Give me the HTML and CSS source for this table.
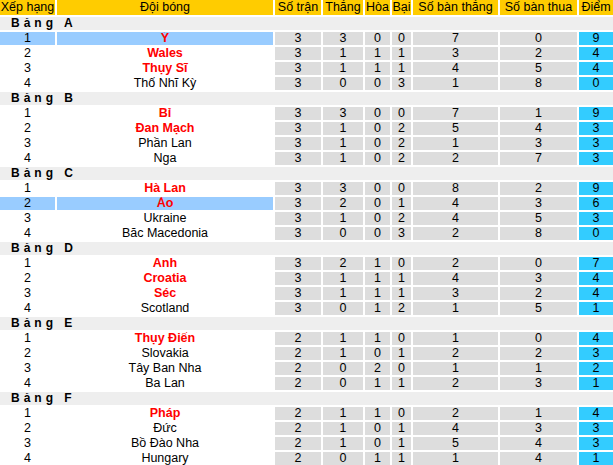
FILE: index.html
```html
<!DOCTYPE html>
<html lang="vi">
<head>
<meta charset="utf-8">
<title>Bảng xếp hạng</title>
<link rel="stylesheet" href="styles.css">
</head>
<body>
<div class="standings">
  <div class="hd">Xếp hạng</div><div class="hd">Đội bóng</div><div class="hd">Số trận</div><div class="hd">Thắng</div><div class="hd">Hòa</div><div class="hd">Bại</div><div class="hd">Số bàn thắng</div><div class="hd">Số bàn thua</div><div class="hd">Điểm</div>

  <div class="grp">Bảng A</div>
  <div class="rk hl">1</div><div class="tm q hl">Ý</div><div class="n">3</div><div class="n">3</div><div class="n">0</div><div class="n">0</div><div class="n">7</div><div class="n">0</div><div class="pt">9</div>
  <div class="rk">2</div><div class="tm q">Wales</div><div class="n">3</div><div class="n">1</div><div class="n">1</div><div class="n">1</div><div class="n">3</div><div class="n">2</div><div class="pt">4</div>
  <div class="rk">3</div><div class="tm q">Thụy Sĩ</div><div class="n">3</div><div class="n">1</div><div class="n">1</div><div class="n">1</div><div class="n">4</div><div class="n">5</div><div class="pt">4</div>
  <div class="rk">4</div><div class="tm">Thổ Nhĩ Kỳ</div><div class="n">3</div><div class="n">0</div><div class="n">0</div><div class="n">3</div><div class="n">1</div><div class="n">8</div><div class="pt">0</div>

  <div class="grp">Bảng B</div>
  <div class="rk">1</div><div class="tm q">Bỉ</div><div class="n">3</div><div class="n">3</div><div class="n">0</div><div class="n">0</div><div class="n">7</div><div class="n">1</div><div class="pt">9</div>
  <div class="rk">2</div><div class="tm q">Đan Mạch</div><div class="n">3</div><div class="n">1</div><div class="n">0</div><div class="n">2</div><div class="n">5</div><div class="n">4</div><div class="pt">3</div>
  <div class="rk">3</div><div class="tm">Phần Lan</div><div class="n">3</div><div class="n">1</div><div class="n">0</div><div class="n">2</div><div class="n">1</div><div class="n">3</div><div class="pt">3</div>
  <div class="rk">4</div><div class="tm">Nga</div><div class="n">3</div><div class="n">1</div><div class="n">0</div><div class="n">2</div><div class="n">2</div><div class="n">7</div><div class="pt">3</div>

  <div class="grp">Bảng C</div>
  <div class="rk">1</div><div class="tm q">Hà Lan</div><div class="n">3</div><div class="n">3</div><div class="n">0</div><div class="n">0</div><div class="n">8</div><div class="n">2</div><div class="pt">9</div>
  <div class="rk hl">2</div><div class="tm q hl">Ảo</div><div class="n">3</div><div class="n">2</div><div class="n">0</div><div class="n">1</div><div class="n">4</div><div class="n">3</div><div class="pt">6</div>
  <div class="rk">3</div><div class="tm">Ukraine</div><div class="n">3</div><div class="n">1</div><div class="n">0</div><div class="n">2</div><div class="n">4</div><div class="n">5</div><div class="pt">3</div>
  <div class="rk">4</div><div class="tm">Bắc Macedonia</div><div class="n">3</div><div class="n">0</div><div class="n">0</div><div class="n">3</div><div class="n">2</div><div class="n">8</div><div class="pt">0</div>

  <div class="grp">Bảng D</div>
  <div class="rk">1</div><div class="tm q">Anh</div><div class="n">3</div><div class="n">2</div><div class="n">1</div><div class="n">0</div><div class="n">2</div><div class="n">0</div><div class="pt">7</div>
  <div class="rk">2</div><div class="tm q">Croatia</div><div class="n">3</div><div class="n">1</div><div class="n">1</div><div class="n">1</div><div class="n">4</div><div class="n">3</div><div class="pt">4</div>
  <div class="rk">3</div><div class="tm q">Séc</div><div class="n">3</div><div class="n">1</div><div class="n">1</div><div class="n">1</div><div class="n">3</div><div class="n">2</div><div class="pt">4</div>
  <div class="rk">4</div><div class="tm">Scotland</div><div class="n">3</div><div class="n">0</div><div class="n">1</div><div class="n">2</div><div class="n">1</div><div class="n">5</div><div class="pt">1</div>

  <div class="grp">Bảng E</div>
  <div class="rk">1</div><div class="tm q">Thụy Điển</div><div class="n">2</div><div class="n">1</div><div class="n">1</div><div class="n">0</div><div class="n">1</div><div class="n">0</div><div class="pt">4</div>
  <div class="rk">2</div><div class="tm">Slovakia</div><div class="n">2</div><div class="n">1</div><div class="n">0</div><div class="n">1</div><div class="n">2</div><div class="n">2</div><div class="pt">3</div>
  <div class="rk">3</div><div class="tm">Tây Ban Nha</div><div class="n">2</div><div class="n">0</div><div class="n">2</div><div class="n">0</div><div class="n">1</div><div class="n">1</div><div class="pt">2</div>
  <div class="rk">4</div><div class="tm">Ba Lan</div><div class="n">2</div><div class="n">0</div><div class="n">1</div><div class="n">1</div><div class="n">2</div><div class="n">3</div><div class="pt">1</div>

  <div class="grp">Bảng F</div>
  <div class="rk">1</div><div class="tm q">Pháp</div><div class="n">2</div><div class="n">1</div><div class="n">1</div><div class="n">0</div><div class="n">2</div><div class="n">1</div><div class="pt">4</div>
  <div class="rk">2</div><div class="tm">Đức</div><div class="n">2</div><div class="n">1</div><div class="n">0</div><div class="n">1</div><div class="n">4</div><div class="n">3</div><div class="pt">3</div>
  <div class="rk">3</div><div class="tm">Bồ Đào Nha</div><div class="n">2</div><div class="n">1</div><div class="n">0</div><div class="n">1</div><div class="n">5</div><div class="n">4</div><div class="pt">3</div>
  <div class="rk">4</div><div class="tm">Hungary</div><div class="n">2</div><div class="n">0</div><div class="n">1</div><div class="n">1</div><div class="n">1</div><div class="n">4</div><div class="pt">1</div>
</div>
</body>
</html>
```

FILE: styles.css
```css
html, body {
  margin: 0;
  padding: 0;
  background: #ffffff;
}

.standings {
  display: grid;
  grid-template-columns: 55px 216px 46px 40px 25px 19px 85px 77px 34px;
  grid-template-rows: 15px;
  grid-auto-rows: 13px;
  gap: 2px;
  width: 613px;
  font-family: "Liberation Sans", Arial, sans-serif;
  font-size: 12.5px;
  line-height: 13px;
  color: #000000;
}

.standings > div {
  text-align: center;
  white-space: nowrap;
  overflow: hidden;
}

.hd {
  background: #ffcc00;
  line-height: 15px;
}

.grp {
  grid-column: 1 / -1;
  background: #eeeeee;
  text-align: left !important;
  padding-left: 11px;
  font-size: 12px;
  font-weight: bold;
  letter-spacing: 4px;
}

.n {
  background: #dddddd;
}

.pt {
  background: #33ccff;
}

.hl {
  background: #99ccff;
}

.q {
  color: #ff0000;
  font-weight: bold;
}
```
